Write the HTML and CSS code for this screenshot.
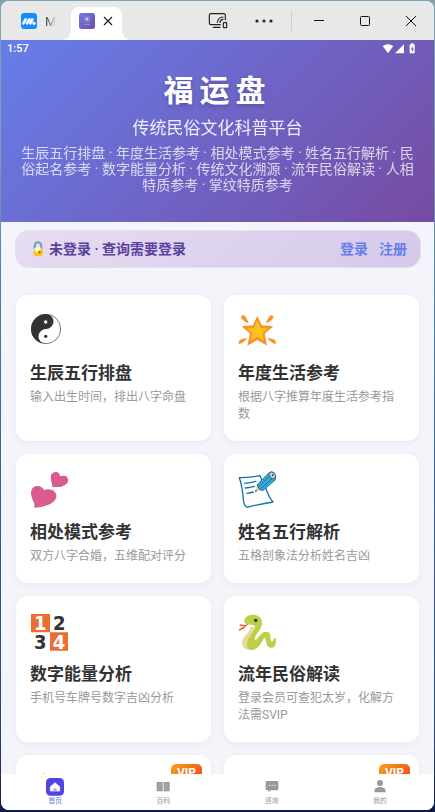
FILE: index.html
```html
<!DOCTYPE html>
<html lang="zh-CN">
<head>
    <meta charset="UTF-8">
    <meta name="viewport" content="width=device-width, initial-scale=1.0">
    <title>福运盘</title>
    <link rel="stylesheet" href="styles.css">
</head>
<body>

    <div class="window">
        <div class="titlebar">
            <button class="tab" aria-label="M">
                <svg width="16" height="16" viewBox="0 0 48 48">
                    <rect width="48" height="48" rx="10" fill="#168bff"/>
                    <path d="M7 31 L14 19 M18 31 L25 19 M28 31 L34 19" stroke="#fff" stroke-width="8" stroke-linecap="round"/>
                    <circle cx="39" cy="31" r="5" fill="#fff"/>
                </svg>
                <span class="tab-name">M</span>
            </button>
            <div class="tab active">
                <svg width="16" height="16" viewBox="0 0 48 48">
                    <defs>
                        <linearGradient id="appIcon" x1="0" y1="0" x2="1" y2="1">
                            <stop offset="0" stop-color="#667eea"/>
                            <stop offset="1" stop-color="#764ba2"/>
                        </linearGradient>
                    </defs>
                    <rect width="48" height="48" rx="7" fill="url(#appIcon)"/>
                    <circle cx="24" cy="18" r="10" fill="#8580d2"/>
                    <circle cx="24" cy="18" r="4" fill="#d4cff0"/>
                    <path d="M16 34h16" stroke="#a79bd6" stroke-width="3"/>
                </svg>
                <button class="tab-close" aria-label="关闭标签">
                    <svg width="10" height="10" viewBox="0 0 10 10"><path d="M1 1l8 8M9 1L1 9" stroke="#222" stroke-width="1.2"/></svg>
                </button>
            </div>
            <div class="window-tools">
                <button aria-label="投屏">
                    <svg width="20" height="18" viewBox="0 0 60 54" fill="none" stroke="#222" stroke-width="3.5" stroke-linecap="round" stroke-linejoin="round">
                        <path d="M37 38H9q-5 0-5-5V10q0-5 5-5h38q5 0 5 5v13M16 46h20"/>
                        <path d="M28 31q2-15 17-16M36 31q1-8 9-9"/>
                        <rect x="46" y="32" width="10" height="15" rx="2"/>
                    </svg>
                </button>
                <button aria-label="更多">
                    <svg width="18" height="4" viewBox="0 0 18 4" fill="#222"><circle cx="2" cy="2" r="1.6"/><circle cx="9" cy="2" r="1.6"/><circle cx="16" cy="2" r="1.6"/></svg>
                </button>
                <span class="divider"></span>
                <button aria-label="最小化">
                    <svg width="10" height="10" viewBox="0 0 10 10"><path d="M0 4.5h10" stroke="#111"/></svg>
                </button>
                <button aria-label="最大化">
                    <svg width="10" height="10" viewBox="0 0 10 10"><rect x=".5" y=".5" width="9" height="9" rx="1" fill="none" stroke="#111"/></svg>
                </button>
                <button aria-label="关闭">
                    <svg width="10" height="10" viewBox="0 0 10 10"><path d="M0 0l10 10M10 0L0 10" stroke="#111"/></svg>
                </button>
            </div>
        </div>

        <main class="page">
            <header class="hero">
                <div class="status">
                    <span>1:57</span>
                    <svg width="34" height="12" viewBox="0 0 102 36" fill="#fff">
                        <path d="M2 9Q18-1 34 9L18 31Z"/>
                        <path d="M39 31H66V4Z"/>
                        <path d="M83 4h4V1h7v3h4v27H83z"/>
                        <path d="M92 9l-6 10h4v8l6-10h-4z" fill="#7159b5"/>
                    </svg>
                </div>
                <h1>福运盘</h1>
                <p class="subtitle">传统民俗文化科普平台</p>
                <p class="intro">生辰五行排盘 · 年度生活参考 · 相处模式参考 · 姓名五行解析 · 民俗起名参考 · 数字能量分析 · 传统文化溯源 · 流年民俗解读 · 人相特质参考 · 掌纹特质参考</p>
            </header>

            <section class="login-bar">
                <svg width="14" height="18" viewBox="0 0 42 54">
                    <path d="M11 28V16Q12 7 21 7Q31 8 31 19V27" fill="none" stroke="#6fa3ab" stroke-width="6"/>
                    <rect x="8" y="24" width="27" height="25" rx="9" fill="#fcc21b"/>
                    <path d="M10 28q0-6 8-5l9-3 3 9-9 3-4 7z" fill="#fff6da"/>
                    <circle cx="26" cy="37" r="3" fill="#6b5320"/>
                </svg>
                <span class="login-state">未登录 · 查询需要登录</span>
                <a href="#">登录</a>
                <a href="#">注册</a>
            </section>

            <section class="cards">
                <a class="card" href="#">
                    <svg class="icon" viewBox="90 81 120 120">
                        <circle cx="138" cy="132" r="44" fill="#fff" stroke="#333" stroke-width="2"/>
                        <path d="M138 87A45 45 0 0 0 138 177A22.5 22.5 0 0 1 138 132A22.5 22.5 0 0 0 138 87Z" fill="#333"/>
                        <circle cx="137" cy="111" r="5" fill="#fff"/>
                        <circle cx="137" cy="154" r="5" fill="#333"/>
                    </svg>
                    <h2>生辰五行排盘</h2>
                    <p>输入出生时间，排出八字命盘</p>
                </a>
                <a class="card" href="#">
                    <svg class="icon" viewBox="69 81 120 120">
                        <path d="M127 92L140 121L175 124L149 146L156 182L127 165L97 182L105 146L80 124L114 121Z" fill="#f79329"/>
                        <path d="M127 106L136 128L159 131L142 145L147 167L127 155L107 167L112 145L95 131L118 128Z" fill="#fcc21b"/>
                        <path d="M78 98Q80 88 90 92L102 114Q87 111 78 98ZM176 98Q174 88 164 92L152 114Q167 111 176 98ZM71 177Q70 166 79 163L96 158Q90 173 71 177ZM183 177Q184 166 175 163L158 158Q164 173 183 177Z" fill="#f79329"/>
                    </svg>
                    <h2>年度生活参考</h2>
                    <p>根据八字推算年度生活参考指数</p>
                </a>
                <a class="card" href="#">
                    <svg class="icon" viewBox="90 78 120 120" fill="#da5b8e">
                        <path d="M102 188Q106 181 102 174Q93 156 93 143Q94 127 108 123Q125 121 133 136Q143 130 158 135Q171 143 169 157Q164 173 144 180Q124 188 102 188Z"/>
                        <path d="M156 125Q158 119 155 113Q150 97 154 88Q161 79 171 81Q179 84 181 94Q190 90 199 94Q207 102 203 112Q198 121 184 125Q170 127 156 125Z"/>
                    </svg>
                    <h2>相处模式参考</h2>
                    <p>双方八字合婚，五维配对评分</p>
                </a>
                <a class="card" href="#">
                    <svg class="icon" viewBox="69 78 120 120" fill="none">
                        <path d="M73 98Q104 98 135 92L152 128Q160 155 174 171Q134 177 97 187Q86 182 85 162Q82 125 73 98Z" fill="#fff" stroke="#0f72a6" stroke-width="4" stroke-linejoin="round"/>
                        <path d="M89 115q16-1 34-6M91 129q14-1 27-5M96 145q10-1 19-4" stroke="#0f72a6" stroke-width="4" stroke-linecap="round"/>
                        <path d="M120 141L127 121L143 133Z" fill="#fac9a7"/>
                        <path d="M120 141l2-7 5 4z" fill="#444"/>
                        <path d="M126 120L162 83L182 96L180 105L143 137Q132 137 126 120Z" fill="#40a9d8" stroke="#0f72a6" stroke-width="3"/>
                        <path d="M131 125L166 91M137 131L174 99" stroke="#0f72a6" stroke-width="3"/>
                        <ellipse cx="172" cy="91" rx="8" ry="11" transform="rotate(-40 172 91)" fill="#fac9a7" stroke="#0f72a6" stroke-width="3"/>
                        <circle cx="173" cy="91" r="3" fill="#444"/>
                    </svg>
                    <h2>姓名五行解析</h2>
                    <p>五格剖象法分析姓名吉凶</p>
                </a>
                <a class="card" href="#">
                    <svg class="icon icon-digits" viewBox="90 69 120 120">
                        <path d="M93 72h57v55h-57zM150 127h54v55h-54z" fill="#ed6c30"/>
                        <text x="121" y="121" fill="#fff">1</text>
                        <text x="178" y="121" fill="#333">2</text>
                        <text x="121" y="178" fill="#333">3</text>
                        <text x="177" y="177" fill="#fff">4</text>
                    </svg>
                    <h2>数字能量分析</h2>
                    <p>手机号车牌号数字吉凶分析</p>
                </a>
                <a class="card" href="#">
                    <svg class="icon" viewBox="69 69 120 120" fill="none">
                        <path d="M98 102Q88 109 84 116M90 107L74 105M86 112L72 121" stroke="#f1592b" stroke-width="4"/>
                        <path d="M102 108Q112 113 98 128Q80 145 81 163Q84 181 108 180L122 174L118 112Z" fill="#e3dda0"/>
                        <path d="M97 104Q84 98 89 87Q96 74 115 74Q140 75 141 99Q141 112 128 128Q117 141 119 151Q125 151 132 139Q142 124 155 125Q166 126 166 139Q166 152 169 155Q174 158 176 146Q182 141 183 148Q184 171 171 173Q155 174 154 157L150 143Q145 145 138 160Q126 180 109 180Q94 177 96 159Q98 146 110 131Q120 118 120 108Q112 102 97 104Z" fill="#bdcf46"/>
                        <circle cx="122" cy="91" r="5" fill="#2b2b2b"/>
                    </svg>
                    <h2>流年民俗解读</h2>
                    <p>登录会员可查犯太岁，化解方法需SVIP</p>
                </a>
                <a class="card" href="#">
                    <span class="vip">VIP</span>
                    <svg class="icon" viewBox="0 0 120 120"><path d="M40 2L70 60L37 100L8 60Z" fill="#f79329"/></svg>
                </a>
                <a class="card" href="#">
                    <span class="vip">VIP</span>
                </a>
            </section>
        </main>

        <nav class="tabbar">
            <a class="current" href="#">
                <svg width="18" height="18" viewBox="0 0 54 54">
                    <rect width="54" height="53" rx="13" fill="#4e46e2"/>
                    <path d="M27 14L41 26V39H13V26Z" fill="#fff" stroke="#fff" stroke-width="2" stroke-linejoin="round"/>
                    <path d="M22 40v-7q5-5 10 0v7z" fill="#a9a5f2"/>
                </svg>
                首页
            </a>
            <a href="#">
                <svg width="18" height="18" viewBox="0 0 54 54">
                    <path d="M8 12h18v28H8zM29 12h18v28H29z" fill="#999"/>
                    <path d="M12 19h10M12 26h10M12 33h10M33 19h10M33 26h10M33 33h10" stroke="#bbb" stroke-width="2"/>
                </svg>
                百科
            </a>
            <a href="#">
                <svg width="18" height="18" viewBox="0 0 54 54">
                    <path d="M13 9h28q5 0 5 5v18q0 5-5 5H23l-6 6-1-6h-3q-5 0-5-5V14q0-5 5-5z" fill="#999"/>
                    <path d="M18 22h3M26 22h3M34 22h3" stroke="#fff" stroke-width="4"/>
                </svg>
                咨询
            </a>
            <a href="#">
                <svg width="18" height="18" viewBox="0 0 54 54" fill="#999">
                    <circle cx="27" cy="15" r="9"/>
                    <path d="M10 43V38Q12 27 27 27Q42 27 44 38V43Z"/>
                </svg>
                我的
            </a>
        </nav>
    </div>

</body>
</html>
```

FILE: styles.css
```css
* {
    box-sizing: border-box;
}

body {
    font-family: Roboto, "Noto Sans CJK SC", sans-serif;
    background: linear-gradient(to bottom, #7fa2b5, #8699a6 20%, #3f86b5 35%, #315fac 60%, #2b4480 90%, #101a45);
    height: 100vh;
    margin: 0;
    padding: 1px 1px 2px;
}

h1, h2, p {
    margin: 0;
}

a {
    text-decoration: none;
}

button {
    display: flex;
    align-items: center;
    justify-content: center;
    padding: 0;
    border: none;
    background: none;
    font-family: inherit;
    cursor: pointer;
}

.window {
    display: flex;
    flex-direction: column;
    height: 100%;
    border-radius: 8px;
    overflow: hidden;
    background-color: #f4f5fa;
}

/* title bar */
.titlebar {
    display: flex;
    flex-shrink: 0;
    height: 39px;
    padding-left: 12px;
    background-color: #e8e8e8;
}

.tab {
    display: flex;
    align-items: center;
    gap: 8px;
    height: 33px;
    margin-top: 6px;
    padding: 0 8px 5px;
}

.tab-name {
    width: 10px;
    overflow: hidden;
    font-size: 13px;
    text-align: left;
    background: linear-gradient(to right, #333, #ccc);
    background-clip: text;
    color: transparent;
}

.tab.active {
    position: relative;
    margin-left: 8px;
    width: 51px;
    background-color: #fff;
    border-radius: 8px 8px 0 0;
}

.tab.active::before,
.tab.active::after {
    content: "";
    position: absolute;
    bottom: 0;
    width: 10px;
    height: 10px;
}

.tab.active::before {
    right: 100%;
    background: radial-gradient(circle at 0 0, transparent 10px, #fff 10px);
}

.tab.active::after {
    left: 100%;
    background: radial-gradient(circle at 100% 0, transparent 10px, #fff 10px);
}

.window-tools {
    display: flex;
    align-items: center;
    margin-left: auto;
}

.window-tools button {
    width: 46px;
    height: 39px;
}

.divider {
    width: 1px;
    height: 20px;
    margin: 0 4px;
    background-color: #ccc;
}

/* page */
.page {
    flex: 1;
    min-height: 0;
    overflow-y: auto;
    scrollbar-width: none;
}

.hero {
    padding-bottom: 29px;
    background: linear-gradient(135deg, #667eea 0%, #764ba2 100%);
    color: #fff;
    text-align: center;
}

.status {
    display: flex;
    align-items: center;
    justify-content: space-between;
    height: 17px;
    padding: 0 18px 0 6px;
    font-size: 11px;
    font-weight: 500;
}

.hero h1 {
    margin-top: 16px;
    font-size: 30px;
    line-height: 36px;
    letter-spacing: 6px;
    text-shadow: 0 2px 4px rgba(0, 0, 0, 0.2);
}

.subtitle {
    margin-top: 7px;
    font-size: 17px;
    line-height: 24px;
    opacity: 0.9;
}

.intro {
    margin-top: 5px;
    padding: 0 20px;
    font-size: 14px;
    line-height: 16px;
    opacity: 0.75;
}

.login-bar {
    display: flex;
    align-items: center;
    gap: 11px;
    margin: 8px 13px 0 14px;
    padding: 8px 13px 8px 15px;
    border: 1px solid rgba(118, 75, 162, 0.12);
    border-radius: 14px;
    background: linear-gradient(135deg, #e6ddf1, #d5c9ea);
    background-clip: padding-box;
    font-size: 14px;
    line-height: 20px;
    font-weight: 600;
}

.login-state {
    flex: 1;
    margin-left: -7px;
    color: #5b3f9e;
}

.login-bar a {
    color: #667eea;
}

.cards {
    display: grid;
    grid-template-columns: 1fr 1fr;
    gap: 13px;
    padding: 27px 15px 20px;
}

.card {
    position: relative;
    min-height: 129px;
    padding: 17px 14px 18px;
    border-radius: 12px;
    background-color: #fff;
    box-shadow: 0 2px 8px rgba(0, 0, 0, 0.05);
}

.icon {
    display: block;
    width: 40px;
    height: 40px;
    overflow: visible;
}

.icon-digits text {
    font-family: "DejaVu Sans Condensed", "DejaVu Sans", sans-serif;
    font-size: 60px;
    font-weight: 700;
    text-anchor: middle;
}

.card h2 {
    margin-top: 9px;
    font-size: 17px;
    line-height: 24px;
    color: #333;
}

.card p {
    margin-top: 4px;
    font-size: 12px;
    line-height: 17px;
    color: #999;
}

.vip {
    position: absolute;
    top: 9px;
    right: 9px;
    padding: 0 6px;
    border-radius: 5px;
    background: linear-gradient(135deg, #f5a31a, #f5401c);
    color: #fff;
    font-size: 12px;
    line-height: 18px;
    font-weight: 700;
}

/* bottom tabs */
.tabbar {
    display: flex;
    flex-shrink: 0;
    background-color: #fff;
}

.tabbar a {
    flex: 1;
    display: flex;
    flex-direction: column;
    align-items: center;
    padding: 4px 0;
    font-size: 7px;
    line-height: 10px;
    color: #999;
}

.tabbar a.current {
    color: #667eea;
}
```
